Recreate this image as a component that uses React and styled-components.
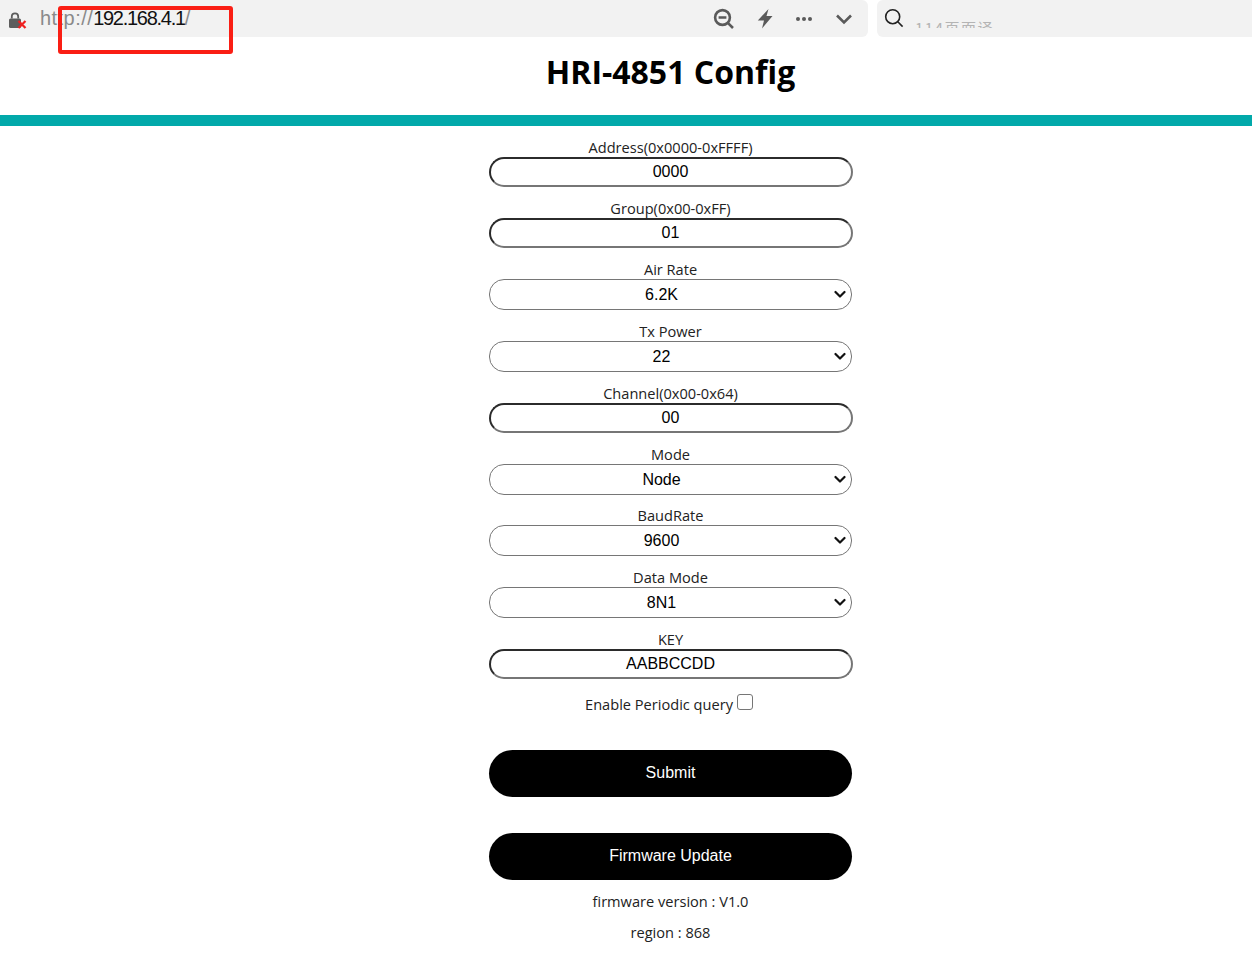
import React from 'react'
import styled, { createGlobalStyle } from 'styled-components'

const GlobalStyle = createGlobalStyle`
  html, body {
    margin: 0;
    padding: 0;
    background: #fff;
    overflow: hidden;
  }
  body {
    font-family: "Open Sans", "Noto Sans", sans-serif;
  }
`

const Page = styled.div`
  width: 1252px;
  height: 958px;
  position: relative;
  overflow: hidden;
`

const BrowserBar = styled.div`
  display: flex;
  gap: 9px;
  height: 37px;
`

const AddressBox = styled.div`
  flex: 0 0 868px;
  display: flex;
  align-items: center;
  background: #f2f2f2;
  border-radius: 0 6px 6px 0;
  padding: 0 15px 0 8px;
  box-sizing: border-box;
`

const Url = styled.div`
  margin-left: 12px;
  font: 20px "Liberation Sans", Arial, sans-serif;
  letter-spacing: 0.45px;
  color: #8a8a8a;
  flex: 1;
  b {
    font-weight: normal;
    letter-spacing: -1.28px;
    color: #111;
  }
`

const ToolIcons = styled.div`
  display: flex;
  align-items: center;
  gap: 22px;
`

const SearchBox = styled.div`
  flex: 1;
  display: flex;
  background: #f2f2f2;
  border-radius: 6px 0 0 6px;
  padding: 8px 0 0 7px;
  overflow: hidden;
`

const SearchHint = styled.div`
  margin: 11px 0 0 11px;
  height: 9px;
  overflow: hidden;
  font: 15px/17px "Noto Sans CJK SC", "Noto Sans", sans-serif;
  letter-spacing: 1.5px;
  color: #b4b4b4;
`

const RedMark = styled.div`
  position: absolute;
  left: 58px;
  top: 6px;
  width: 175px;
  height: 48px;
  box-sizing: border-box;
  border: 4px solid #fa1e14;
  border-radius: 3px;
`

const Main = styled.div`
  display: flex;
  flex-direction: column;
  align-items: center;
  padding-left: 89px;
`

const Title = styled.h1`
  margin: 0;
  height: 78px;
  font-size: 32px;
  line-height: 70px;
  font-weight: 700;
  color: #000;
`

const TealBar = styled.div`
  align-self: stretch;
  margin-left: -89px;
  height: 11px;
  background: #02a9aa;
`

const Form = styled.form`
  width: 364px;
  padding-top: 11px;
  display: flex;
  flex-direction: column;
  align-items: center;
`

const Field = styled.div`
  width: 100%;
  margin-bottom: ${({ $tight }) => ($tight ? '10px' : '11px')};
  text-align: center;
`

const Label = styled.label`
  display: block;
  height: 20px;
  font-size: 14.6px;
  line-height: 20px;
  color: #222;
`

const TextInput = styled.input`
  display: block;
  width: 100%;
  height: 30px;
  box-sizing: border-box;
  padding: 0;
  border: 2px solid #767676;
  border-top-color: #2b2b2b;
  border-left-color: #2b2b2b;
  border-radius: 15px;
  background: #fff;
  outline: none;
  text-align: center;
  font: 16px "Liberation Sans", Arial, sans-serif;
  color: #000;
`

const SelectWrap = styled.div`
  position: relative;
  width: 363px;
  margin: 0 auto;
`

const Select = styled.select`
  display: block;
  appearance: none;
  width: 100%;
  height: 31px;
  box-sizing: border-box;
  padding: 0 18px 0 0;
  border: 1px solid #767676;
  border-radius: 15px;
  background: #fff;
  text-align: center;
  font: 16px "Liberation Sans", Arial, sans-serif;
  color: #000;
`

const SelectArrow = styled.svg`
  position: absolute;
  right: 6px;
  top: 11px;
  pointer-events: none;
`

const CheckRow = styled.div`
  display: flex;
  justify-content: center;
  align-items: flex-start;
  gap: 4px;
  height: 56px;
  font-size: 14.6px;
  line-height: 20px;
  color: #222;
  padding: 4px 3px 0 0;
`

const CheckBox = styled.input`
  appearance: none;
  width: 16px;
  height: 16px;
  margin: 0;
  border: 1px solid #767676;
  border-radius: 3px;
  background: #fff;
`

const BlackButton = styled.button`
  display: block;
  width: 363px;
  height: 47px;
  margin-bottom: 36px;
  border: none;
  border-radius: 24px;
  background: #000;
  color: #fff;
  font: 16px "Liberation Sans", Arial, sans-serif;
  padding: 0 0 2px;
  &:last-child {
    margin-bottom: 11px;
  }
`

const Note = styled.p`
  margin: 0 0 11px;
  height: 20px;
  font-size: 14.6px;
  line-height: 20px;
  color: #222;
  text-align: center;
`

const IconSvg = styled.svg`
  display: block;
  flex: none;
`

const LockSvg = styled(IconSvg)`
  margin-top: 6px;
`

const LockIcon = () => (
  <LockSvg width="20" height="20" viewBox="0 0 20 20">
    <rect x="1" y="6.5" width="12" height="9.5" rx="1.5" fill="#5d5d5d" />
    <path d="M3.8 6.5V4.5a3.2 3.2 0 0 1 6.4 0V6.5" fill="none" stroke="#5d5d5d" strokeWidth="1.8" />
    <path d="M10.500 9l7 7M17.500 9l-7 7" stroke="#f02020" strokeWidth="2.2" />
  </LockSvg>
)

const ZoomOutIcon = () => (
  <IconSvg width="22" height="22" viewBox="0 0 22 22" fill="none" stroke="#5a5a5a" strokeWidth="2.6">
    <circle cx="9.5" cy="9.5" r="7.4" />
    <path d="M5.6 9.5h7.8M14.8 14.8l5.2 5.2" />
  </IconSvg>
)

const BoltIcon = () => (
  <IconSvg width="16" height="20" viewBox="0 0 16 20">
    <path d="M11.5 0L9.5 7H15.5L5 19.5l2-8H.8z" fill="#5a5a5a" />
  </IconSvg>
)

const DotsIcon = () => (
  <IconSvg width="18" height="6" viewBox="0 0 18 6">
    <circle cx="3" cy="3" r="2" fill="#5a5a5a" />
    <circle cx="9" cy="3" r="2" fill="#5a5a5a" />
    <circle cx="15" cy="3" r="2" fill="#5a5a5a" />
  </IconSvg>
)

const ChevronIcon = () => (
  <IconSvg width="18" height="12" viewBox="0 0 18 12" fill="none" stroke="#5a5a5a" strokeWidth="2.6">
    <path d="M2 2.5l7 7 7-7" />
  </IconSvg>
)

const SearchIcon = () => (
  <IconSvg width="20" height="20" viewBox="0 0 20 20" fill="none" stroke="#222" strokeWidth="1.6">
    <circle cx="8.7" cy="8.7" r="7" />
    <path d="M13.8 13.8l4.8 4.8" />
  </IconSvg>
)

const InputField = ({ label, value }) => (
  <Field>
    <Label>{label}</Label>
    <TextInput defaultValue={value} />
  </Field>
)

const SelectField = ({ label, value, tight }) => (
  <Field $tight={tight}>
    <Label>{label}</Label>
    <SelectWrap>
      <Select defaultValue={value}>
        <option>{value}</option>
      </Select>
      <SelectArrow width="12" height="9" viewBox="0 0 12 9" fill="none" stroke="#111" strokeWidth="2.2" strokeLinecap="round" strokeLinejoin="round">
        <path d="M1.5 2l4.5 4.5L10.500 2" />
      </SelectArrow>
    </SelectWrap>
  </Field>
)

const App = () => (
  <Page>
    <GlobalStyle />
    <BrowserBar>
      <AddressBox>
        <LockIcon />
        <Url>
          http://<b>192.168.4.1</b>/
        </Url>
        <ToolIcons>
          <ZoomOutIcon />
          <BoltIcon />
          <DotsIcon />
          <ChevronIcon />
        </ToolIcons>
      </AddressBox>
      <SearchBox>
        <SearchIcon />
        <SearchHint>114页面译</SearchHint>
      </SearchBox>
    </BrowserBar>
    <RedMark />
    <Main>
      <Title>HRI-4851 Config</Title>
      <TealBar />
      <Form>
        <InputField label="Address(0x0000-0xFFFF)" value="0000" />
        <InputField label="Group(0x00-0xFF)" value="01" />
        <SelectField label="Air Rate" value="6.2K" />
        <SelectField label="Tx Power" value="22" />
        <InputField label="Channel(0x00-0x64)" value="00" />
        <SelectField label="Mode" value="Node" tight />
        <SelectField label="BaudRate" value="9600" />
        <SelectField label="Data Mode" value="8N1" />
        <InputField label="KEY" value="AABBCCDD" />
        <CheckRow>
          Enable Periodic query
          <CheckBox type="checkbox" />
        </CheckRow>
        <BlackButton type="button">Submit</BlackButton>
        <BlackButton type="button">Firmware Update</BlackButton>
      </Form>
      <Note>firmware version : V1.0</Note>
      <Note>region : 868</Note>
    </Main>
  </Page>
)

export default App
